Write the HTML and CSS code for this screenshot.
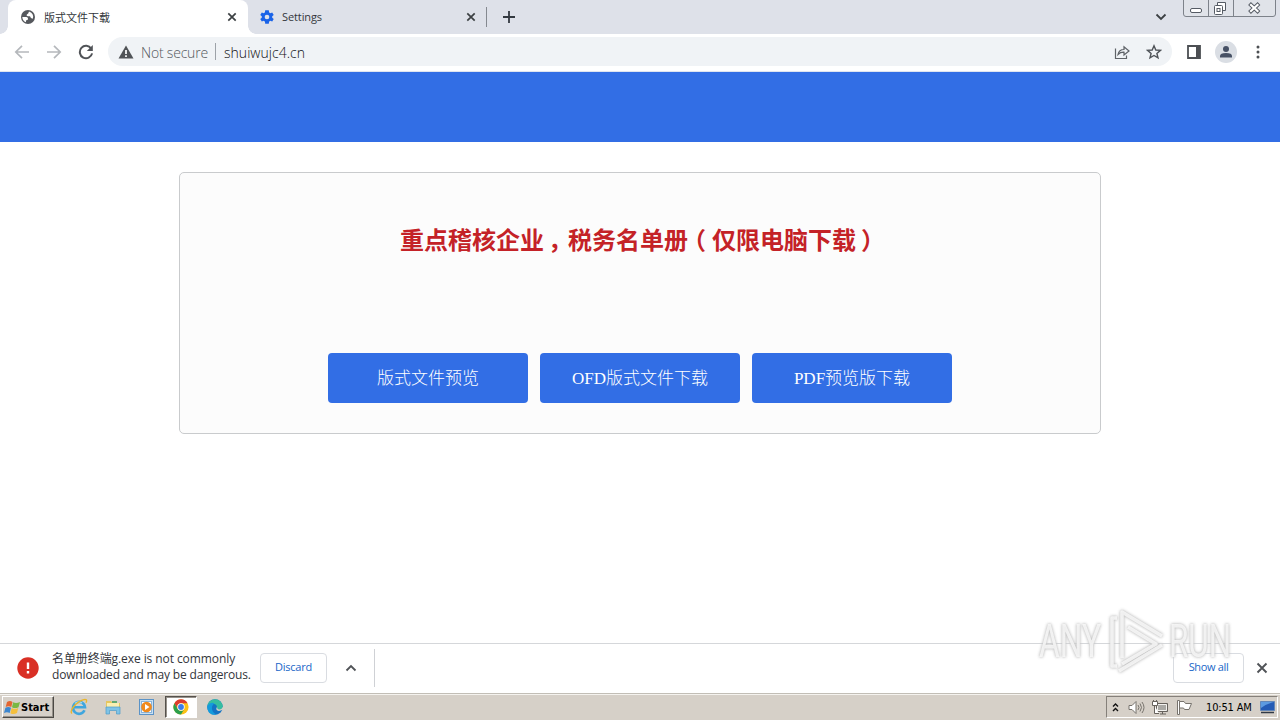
FILE: index.html
```html
<!DOCTYPE html>
<html lang="zh-CN">
<head>
<meta charset="utf-8">
<title>版式文件下载</title>
<link rel="stylesheet" href="styles.css">
</head>
<body>
<div class="screen">
  <header class="tabstrip">
    <div class="tab tab-active">
      <svg class="favicon" width="16" height="16" viewBox="0 0 16 16"><circle cx="8" cy="8" r="7" fill="#55585d"/><path d="M2.300 8H6.500Q8.500 8.200 8 10.500L6 11.500V13.300Q2.500 12 2.300 8z" fill="#fff"/><path d="M9 2.600Q8.500 5 6.800 5.400 6 6.800 8 7.300H10Q10.500 9.500 12.800 9.800 14.500 5 9 2.600z" fill="#fff"/></svg>
      <span class="tab-title tab-title-cjk">版式文件下载</span>
      <svg class="tab-close" width="10" height="10" viewBox="0 0 10 10"><path d="M1.300 1.300 8.700 8.700M8.700 1.300 1.300 8.700" stroke="#3c4043" stroke-width="1.700"/></svg>
    </div>
    <div class="tab tab-second">
      <svg class="favicon" width="16" height="16" viewBox="0 0 24 24"><path fill="#1a63e8" fill-rule="evenodd" d="M19.800 13.100a8 8 0 0 0 0-2.200l2.300-1.800-2.300-4-2.800 1.100a8 8 0 0 0-1.900-1.100L14.700 2H9.300l-.4 3.100A8 8 0 0 0 7 6.200L4.200 5.100 1.900 9.100 4.200 10.900a8 8 0 0 0 0 2.200L1.900 14.900l2.300 4L7 17.800a8 8 0 0 0 1.900 1.100l.4 3.100h5.400l.4-3.100a8 8 0 0 0 1.900-1.100l2.800 1.100 2.300-4zM12 8.500a3.500 3.500 0 1 0 0 7 3.500 3.500 0 0 0 0-7z"/></svg>
      <span class="tab-title tab-title-latin">Settings</span>
      <svg class="tab-close" width="10" height="10" viewBox="0 0 10 10"><path d="M1.300 1.300 8.700 8.700M8.700 1.300 1.300 8.700" stroke="#3c4043" stroke-width="1.700"/></svg>
    </div>
    <div class="tab-divider"></div>
    <svg class="new-tab" width="12" height="12" viewBox="0 0 12 12"><path d="M6 0V12M0 6H12" stroke="#333940" stroke-width="1.800"/></svg>
    <svg class="tab-search" width="12" height="8" viewBox="0 0 12 8"><path d="M1.500 1.500 6 6 10.500 1.500" fill="none" stroke="#3c4043" stroke-width="1.800"/></svg>
    <svg class="window-buttons" width="94" height="18" viewBox="0 0 94 18"><path d="M.5 0V14Q.5 16.500 3 16.500H90Q92.500 16.500 92.500 14V0M25.500 0V16M50.500 0V16" fill="#e0e3e9" stroke="#7d828a"/><rect x="7.500" y="8.500" width="11" height="4" rx="1.500" fill="#fff" stroke="#555b64"/><path d="M34.500 2.500h8v8h-8z" fill="#fff" stroke="#555b64"/><rect x="31.500" y="5.500" width="8" height="9" rx="1" fill="#fff" stroke="#555b64"/><rect x="34" y="8.500" width="3" height="3" fill="none" stroke="#555b64"/><path d="M66.500 3.500 76 12.500M76 3.500 66.500 12.500" stroke="#555b64" stroke-width="4"/><path d="M67.200 4.200 75.300 11.800M75.300 4.200 67.200 11.800" stroke="#fff" stroke-width="2.200"/></svg>
  </header>

  <nav class="toolbar">
    <svg class="nav-icon" width="16" height="16" viewBox="0 0 16 16"><path d="M15 8H2M8 1.800 1.800 8 8 14.200" fill="none" stroke="#b5b8bc" stroke-width="1.700"/></svg>
    <svg class="nav-icon" width="16" height="16" viewBox="0 0 16 16"><path d="M1 8H14M8 1.800 14.200 8 8 14.200" fill="none" stroke="#b5b8bc" stroke-width="1.700"/></svg>
    <svg class="nav-icon" width="16" height="16" viewBox="0 0 16 16"><path d="M13.200 4.600A6.200 6.200 0 1 0 14.100 9.400" fill="none" stroke="#505357" stroke-width="2"/><path d="M14.800 1V7H8.800z" fill="#505357"/></svg>
    <div class="omnibox">
      <svg class="warn" width="16" height="14" viewBox="0 0 16 14"><path d="M8 .5 15.500 13.500H.5z" fill="#505357"/><path d="M8 5V9M8 10.300V12" stroke="#fff" stroke-width="1.700"/></svg>
      <span class="security">Not secure</span>
      <span class="omni-divider"></span>
      <span class="url">shuiwujc4.cn</span>
      <svg class="share" width="16" height="16" viewBox="0 0 16 16"><path d="M1.500 4.500V14.500H12.500V11.500M4 10.500Q5 5.500 10 5.500V2.800L15 7 10 11V8.200Q6.500 8 4 10.500Z" fill="none" stroke="#5f6368" stroke-width="1.200"/></svg>
      <svg class="star" width="16" height="16" viewBox="0 0 16 16"><path d="M8 1.800 9.800 6 14.400 6.400 10.900 9.400 12 13.900 8 11.500 4 13.900 5.100 9.400 1.600 6.400 6.200 6Z" fill="none" stroke="#4f5358" stroke-width="1.400"/></svg>
    </div>
    <svg class="side-panel" width="14" height="14" viewBox="0 0 14 14"><path d="M1 1H13V13H1z" fill="none" stroke="#4c4f53" stroke-width="1.800"/><path d="M9 1H13V13H9z" fill="#4c4f53"/></svg>
    <svg class="avatar" width="22" height="22" viewBox="0 0 22 22"><circle cx="11" cy="11" r="11" fill="#dadee4"/><circle cx="11" cy="8" r="3" fill="#465064"/><path d="M5 16.500V15Q5 12 11 12T17 15V16.500Z" fill="#465064"/></svg>
    <svg class="kebab" width="4" height="14" viewBox="0 0 4 14"><g fill="#4c4f53"><circle cx="2" cy="2" r="1.500"/><circle cx="2" cy="7" r="1.500"/><circle cx="2" cy="12" r="1.500"/></g></svg>
  </nav>

  <main class="page">
    <div class="banner"></div>
    <section class="card">
      <h1 class="headline">重点稽核企业<span class="comma">，</span>税务名单册<span class="paren-open">（</span>仅限电脑下载<span class="paren-close">）</span></h1>
      <div class="actions">
        <a class="action">版式文件预览</a>
        <a class="action">OFD版式文件下载</a>
        <a class="action">PDF预览版下载</a>
      </div>
    </section>
  </main>

  <footer class="shelf">
    <svg class="danger" width="22" height="22" viewBox="0 0 22 22"><circle cx="11" cy="11" r="10.700" fill="#d93025"/><path d="M11 5.500V12M11 14V16.500" stroke="#fff" stroke-width="2.400"/></svg>
    <div class="warning">
      <div class="warning-first"><span class="filename">名单册终端</span>g.exe is not commonly</div>
      <div class="warning-second">downloaded and may be dangerous.</div>
    </div>
    <div class="shelf-button discard">Discard</div>
    <svg class="expand" width="12" height="8" viewBox="0 0 12 8"><path d="M1.500 6.500 6 2 10.500 6.500" fill="none" stroke="#505357" stroke-width="1.800"/></svg>
    <div class="shelf-divider"></div>
    <div class="shelf-button show-all">Show all</div>
    <svg class="shelf-close" width="12" height="12" viewBox="0 0 12 12"><path d="M1.500 1.500 10.500 10.500M10.500 1.500 1.500 10.500" stroke="#505357" stroke-width="1.900"/></svg>
  </footer>

  <div class="taskbar">
    <div class="start">
      <svg width="17" height="15" viewBox="0 0 17 15"><path d="M3 2Q6 0 8.500 2L7.300 7Q4.500 5.500 1.700 7z" fill="#e36531"/><path d="M9.200 2.300Q12 4 16 2L14.500 7.200Q11 9 8 7.200z" fill="#79b843"/><path d="M1.400 7.700Q4.500 6.200 7 7.800L5.700 13Q3 11.500 0 13z" fill="#3c86cf"/><path d="M7.700 8Q11 9.700 14.200 8L13 13Q9.500 15 6.400 13.200z" fill="#f4bf3c"/></svg>
      <span class="start-label">Start</span>
    </div>
    <div class="task"><svg width="18" height="18" viewBox="0 0 18 18"><path d="M14.500 12.300A6 6 0 1 1 15 9.300H4" fill="none" stroke="#3fa6de" stroke-width="2.600"/><path d="M5 5.500A5 5 0 0 1 12 5" fill="none" stroke="#9cdcf7" stroke-width="1.200"/><path d="M2 15.500C-1 13 6 4 13 1.800Q18 .4 16 4.800" fill="none" stroke="#e9b52c" stroke-width="1.400"/></svg></div>
    <div class="task"><svg width="18" height="18" viewBox="0 0 18 18"><path d="M2 3H7L8.500 5H16V12H2z" fill="#e6c65e"/><path d="M3 5H15V10H3z" fill="#fbefb1"/><path d="M8 3H13V5H8z" fill="#62a973"/><path d="M2 9H16V16H12.500V12.500H5.500V16H2z" fill="#7fc3e6" stroke="#4f9cc8" stroke-width=".7"/></svg></div>
    <div class="task"><svg width="18" height="18" viewBox="0 0 18 18"><rect x="1.500" y="1.500" width="14" height="15" fill="#c9e0f3" stroke="#5b93c7"/><rect x="3.500" y="3.500" width="10" height="11" fill="#fff" stroke="#88b3da"/><circle cx="8.500" cy="9" r="5.300" fill="#f08a1d"/><path d="M7 6 11.500 9 7 12z" fill="#fff"/></svg></div>
    <div class="task task-active"><svg width="16" height="16" viewBox="0 0 16 16"><circle cx="8" cy="8" r="7.600" fill="#fbc116"/><path d="M1.400 4.200A7.600 7.600 0 0 1 14.600 4.200H8A3.800 3.800 0 0 0 4.700 9.900z" fill="#dc3c2f"/><path d="M1.400 4.200A7.600 7.600 0 0 0 8 15.600L11.300 9.900A3.800 3.800 0 0 1 4.700 9.900z" fill="#2b9f4c"/><circle cx="8" cy="8" r="3.700" fill="#fff"/><circle cx="8" cy="8" r="2.900" fill="#3b7de8"/></svg></div>
    <div class="task task-edge"><svg width="18" height="18" viewBox="0 0 18 18"><circle cx="9" cy="9" r="7.800" fill="#1473c4"/><path d="M1.300 8A7.800 7.800 0 0 1 16.800 8.500Q16.500 12 12.500 11.800 10.500 11.500 11 9 10.500 5.800 6.500 5.800 3 5.800 1.300 8z" fill="#36bda0"/><path d="M1.300 8Q4 3.500 8.500 5.300 5 8 6.200 12 7.500 15.800 11 16.500 3 18 1.500 11z" fill="#149bdc"/><path d="M11 8.700Q9.500 11 11 12.300 13 13.700 16.700 11.800L17.600 12.500Q18 9 17 8.800 16 11.500 13 11.500 11 11.300 11 8.700z" fill="#d6d0c8"/></svg></div>
    <div class="tray">
      <svg class="tray-up" width="7" height="9" viewBox="0 0 7 9"><path d="M1 3.500 3.500 1 6 3.500M1 8 3.500 5.500 6 8" fill="none" stroke="#111" stroke-width="1.400"/></svg>
      <svg class="volume" width="17" height="15" viewBox="0 0 17 15"><path d="M1 5.500H4L8 1.500V13.500L4 9.500H1z" fill="#fff" stroke="#77736d"/><path d="M10 5Q12 7.500 10 10M12 3.500Q15 7.500 12 11.500M14 2Q18 7.500 14 13" fill="none" stroke="#77736d"/></svg>
      <svg class="network" width="17" height="15" viewBox="0 0 17 15"><path d="M4.500 3.500H15.500V11.500H4.500z" fill="#aaa9a5" stroke="#66625d"/><path d="M5.500 4.500H14.500V10.500H5.500z" fill="none" stroke="#f3f2ef"/><path d="M8 14H14M10.500 11.500V14" stroke="#66625d"/><path d="M.5 1.500H5.500V5.500H.5zM2.500 5.500V13.500H7M1.500 0V2M4.500 0V2" fill="#fff" stroke="#66625d"/></svg>
      <svg class="flag" width="17" height="15" viewBox="0 0 17 15"><path d="M1.500 .5H3.500V14.500H1.500z" fill="#fff" stroke="#77736d"/><path d="M3.500 1.500H8L9.500 3.500H15.500L13 9.500H8.500L7.500 8H3.500z" fill="#fff" stroke="#77736d"/></svg>
      <span class="clock">10:51 AM</span>
      <svg class="desktop" width="15" height="13" viewBox="0 0 15 13"><path d="M.5.500H14.500V9.500H.5z" fill="#255bb5" stroke="#6487b7"/><path d="M1 1H14Q6 3 1 7z" fill="#5d9ae0"/><path d="M1 11.500H14" stroke="#303946" stroke-width="1.500"/></svg>
    </div>
  </div>

  <svg class="watermark" width="210" height="76" viewBox="0 0 210 76">
    <g class="watermark-shape">
      <text class="watermark-text" x="5" y="52" textLength="62" lengthAdjust="spacingAndGlyphs">ANY</text>
      <text class="watermark-text" x="135" y="52" textLength="62" lengthAdjust="spacingAndGlyphs">RUN</text>
      <path d="M83 13H78V61H83M88 53V7L128 31M94 22 122 39 88 59M85 66 128 40" fill="none" stroke="#fff" stroke-width="3.500" stroke-linejoin="round"/>
    </g>
  </svg>
</div>
</body>
</html>
```
FILE: styles.css
```css
* { box-sizing: border-box; }
body { margin: 0; overflow: hidden; }
svg { display: block; flex: none; }
.screen {
  position: relative;
  display: flex;
  flex-direction: column;
  width: 1280px;
  height: 720px;
  background: #fff;
  font-family: "Open Sans", "Noto Sans CJK SC", sans-serif;
  white-space: nowrap;
}
.tabstrip { display: flex; align-items: center; height: 34px; background: #dee1e9; }
.tab { display: flex; align-items: center; height: 34px; }
.tab-active {
  position: relative;
  width: 240px;
  margin-left: 8px;
  padding: 0 11px 0 12px;
  border-radius: 8px 8px 0 0;
  background: #fff;
}
.tab-active::before,
.tab-active::after {
  content: "";
  position: absolute;
  bottom: 0;
  width: 8px;
  height: 8px;
}
.tab-active::before { left: -8px; background: radial-gradient(circle at 0 0, transparent 7.5px, #fff 8px); }
.tab-active::after { right: -8px; background: radial-gradient(circle at 100% 0, transparent 7.5px, #fff 8px); }
.tab-second { width: 238px; padding: 0 10px 0 11px; }
.tab-title { margin-left: 7px; font-size: 11px; color: #33373c; }
.tab-title-cjk { margin-left: 8px; padding-bottom: 1px; }
.tab-title-latin { padding-bottom: 2px; letter-spacing: -.1px; }
.tab-close { margin-left: auto; }
.tab-divider { width: 1px; height: 20px; background: #858990; }
.new-tab { margin-left: 16px; }
.tab-search { margin-left: auto; }
.window-buttons { margin: 0 3px 0 16px; align-self: flex-start; }

.toolbar {
  display: flex;
  align-items: center;
  height: 38px;
  padding: 0 20px 2px 14px;
  border-bottom: 1px solid #dfe5ef;
}
.nav-icon { margin-right: 16px; }
.omnibox {
  display: flex;
  align-items: center;
  width: 1064px;
  height: 29px;
  margin-left: -2px;
  padding: 0 10px;
  border-radius: 15px;
  background: #f0f3f6;
}
.security { width: 67px; margin-left: 7px; padding-top: 2px; font-size: 14px; font-weight: 300; letter-spacing: -.2px; color: #54585d; }
.omni-divider { width: 1px; height: 17px; margin: 0 8px 0 7px; background: #9da2a8; }
.url { padding-top: 2px; font-size: 14px; font-weight: 300; letter-spacing: .03px; color: #101114; }
.share { margin-left: auto; }
.star { margin-left: 16px; }
.side-panel { margin-left: 15px; }
.avatar { margin-left: 14px; }
.kebab { margin-left: auto; }

.page { height: 571px; }
.banner { height: 70px; background: #326ee5; }
.card {
  width: 922px;
  height: 262px;
  margin: 30px auto 0;
  padding-top: 48px;
  border: 1px solid #c9cbcd;
  border-radius: 5px;
  background: #fcfcfc;
}
.headline {
  margin: 0;
  font: 700 24px/36px "Noto Sans CJK SC", sans-serif;
  text-align: center;
  color: #c42227;
}
.comma { margin: 0 -4px 0 4px; }
.paren-open { margin: 0 6px 0 -6px; }
.paren-close { margin: 0 -5px 0 5px; }
.actions { display: flex; justify-content: center; gap: 12px; margin-top: 96px; }
.action {
  width: 200px;
  height: 50px;
  border-radius: 4px;
  background: #326ee5;
  color: #fff;
  font: 300 17px/51px "Liberation Serif", "Noto Sans CJK SC", serif;
  text-align: center;
}

.shelf { display: flex; align-items: center; height: 50px; padding: 0 12px 2px 17px; border-top: 1px solid #d5d7da; }
.warning { width: 200px; margin-left: 13px; padding-bottom: 1px; font-size: 12px; line-height: 16px; color: #33363b; }
.warning-first { letter-spacing: -.08px; }
.warning-second { letter-spacing: -.17px; }
.shelf-button {
  height: 30px;
  border: 1px solid #d9dce1;
  border-radius: 4px;
  font-size: 11px;
  line-height: 26px;
  text-align: center;
  color: #1967c8;
}
.discard { width: 67px; margin-left: 8px; letter-spacing: -.25px; }
.expand { margin-left: 18px; }
.shelf-divider { width: 1px; height: 38px; margin-left: 17px; background: #cfd1d5; }
.show-all { width: 71px; margin-left: auto; background: #fff; letter-spacing: -.35px; }
.shelf-close { margin-left: 12px; }

.taskbar {
  display: flex;
  align-items: center;
  height: 27px;
  padding: 2px;
  border-top: 1px solid #c2beb6;
  background: #d6d0c8;
  box-shadow: inset 0 1px #f5f3ef;
}
.start {
  display: flex;
  align-items: center;
  width: 52px;
  height: 22px;
  padding-left: 1px;
  border: 1px solid;
  border-color: #fff #4c4944 #4c4944 #fff;
  box-shadow: inset -1px -1px #96918a;
}
.start-label { font: 700 11px "DejaVu Sans Condensed", "DejaVu Sans", sans-serif; color: #000; }
.task { display: flex; justify-content: center; align-items: center; width: 32px; height: 22px; margin-right: 2px; }
.start + .task { margin-left: 9px; }
.task-active { border: 1px solid; border-color: #55514c #fff #fff #55514c; background: #fff; box-shadow: inset 1px 1px #96918a; }
.tray {
  display: flex;
  align-items: center;
  width: 172px;
  height: 22px;
  margin-left: auto;
  padding-left: 5px;
  border: 1px solid;
  border-color: #85807a #fff #fff #85807a;
}
.volume { margin-left: 9px; }
.network { margin-left: 7px; }
.flag { margin-left: 7px; }
.clock { width: 47px; margin-left: 13px; font: 11px "DejaVu Sans Condensed", "DejaVu Sans", sans-serif; letter-spacing: -.15px; color: #000; }
.desktop { margin-left: 7px; }

.watermark {
  position: absolute;
  left: 1034px;
  top: 605px;
  filter: drop-shadow(0 0 1.5px #b4b4b4) drop-shadow(0 0 1px #d8d8d8);
}
.watermark-shape { opacity: .75; }
.watermark-text { font: 400 46px "Roboto", sans-serif; fill: #fff; }
```
